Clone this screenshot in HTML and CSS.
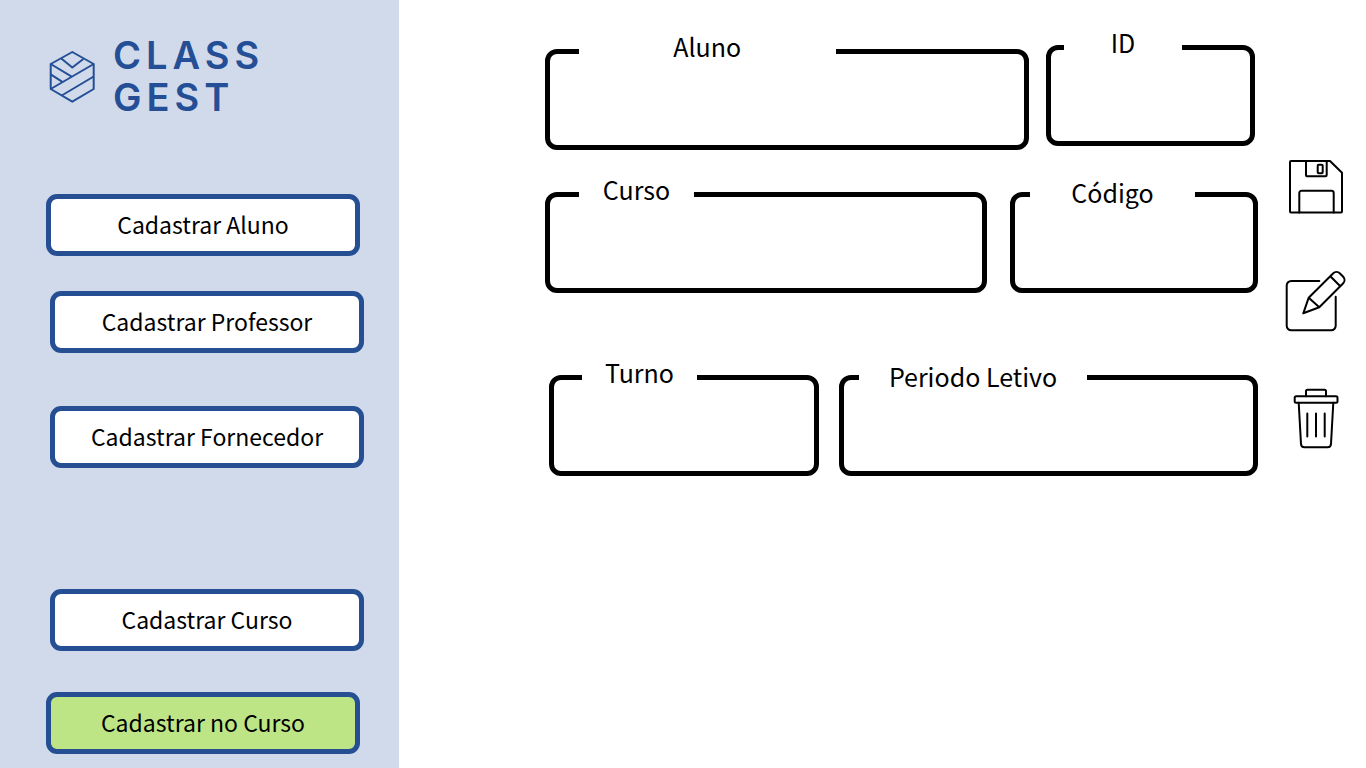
FILE: index.html
```html
<!DOCTYPE html>
<html lang="pt-BR">
<head>
<meta charset="utf-8">
<meta name="viewport" content="width=device-width, initial-scale=1">
<title>Class Gest</title>
<link rel="stylesheet" href="styles.css">
</head>
<body>
<div class="app">
  <aside class="sidebar">
    <div class="brand">
      <svg class="brand-mark" viewBox="0 0 46 52" aria-hidden="true">
        <path d="M23.3 1 44.7 13V38L23.3 50.7 1.7 38V13Z"/>
        <path d="M12.3 7.5 23.3 16.5 34.3 8"/>
        <path d="M44.7 13 1.7 38M1.7 13 22.7 25.7M1.7 23.3 13 30.7M44.7 25.5 12.7 44.5"/>
      </svg>
      <div class="brand-name">CLASS<br>GEST</div>
    </div>
    <nav class="menu">
      <button type="button" class="menu-item">Cadastrar Aluno</button>
      <button type="button" class="menu-item menu-item-inset professor">Cadastrar Professor</button>
      <button type="button" class="menu-item menu-item-inset fornecedor">Cadastrar Fornecedor</button>
      <button type="button" class="menu-item menu-item-inset curso">Cadastrar Curso</button>
      <button type="button" class="menu-item menu-item-active no-curso">Cadastrar no Curso</button>
    </nav>
  </aside>
  <main class="content">
    <form class="form">
      <div class="row row-student">
        <div class="field field-student"><label for="aluno">Aluno</label><input id="aluno" type="text"></div>
        <div class="field field-id"><label for="id">ID</label><input id="id" type="text"></div>
      </div>
      <div class="row row-course">
        <div class="field field-course"><label for="curso">Curso</label><input id="curso" type="text"></div>
        <div class="field field-code"><label for="codigo">Código</label><input id="codigo" type="text"></div>
      </div>
      <div class="row row-term">
        <div class="field field-shift"><label for="turno">Turno</label><input id="turno" type="text"></div>
        <div class="field field-period"><label for="periodo">Periodo Letivo</label><input id="periodo" type="text"></div>
      </div>
    </form>
    <div class="tools">
      <button type="button" class="tool" aria-label="Salvar">
        <svg viewBox="0 0 62 62" aria-hidden="true">
          <path d="M7 5H46L58 16.7V55.5a1 1 0 0 1-1 1h-50a1 1 0 0 1-1-1V6a1 1 0 0 1 1-1Z"/>
          <path d="M22 5V19a1.3 1.3 0 0 0 1.3 1.3H41.4A1.3 1.3 0 0 0 42.7 19V5M15.3 56.5V37a2.3 2.3 0 0 1 2.3-2.3H47.4A2.3 2.3 0 0 1 49.7 37V56.5"/>
          <rect x="33.7" y="8.7" width="5" height="8.6" rx="1"/>
        </svg>
      </button>
      <button type="button" class="tool" aria-label="Editar">
        <svg viewBox="0 0 62 62" aria-hidden="true">
          <path d="M35.3 9H7.2A4.5 4.5 0 0 0 2.7 13.5V53.8A4.5 4.5 0 0 0 7.2 58.3H47.2A4.5 4.5 0 0 0 51.7 53.8V24.7"/>
          <path d="M19.3 41.3 24.7 25.7 49 1.5C51-.5 54-.5 56 1.5L59 4.5C61 6.5 61 9.5 59 11.5L35.3 35.3ZM24.7 25.7 35.3 35.3M46.3 4.3 56.3 14.3"/>
        </svg>
      </button>
      <button type="button" class="tool" aria-label="Excluir">
        <svg viewBox="0 0 62 62" aria-hidden="true">
          <rect x="10.7" y="8.3" width="42.8" height="6.4" rx="1.5"/>
          <path d="M22 8.3V3.2A1.5 1.5 0 0 1 23.5 1.7H40.5A1.5 1.5 0 0 1 42 3.2V8.3M14.7 14.7 17 56A3.5 3.5 0 0 0 20.5 59.3H43.5A3.5 3.5 0 0 0 47 56L49.3 14.7M23.3 25.5V48.5M32 25.5V48.5M40.7 25.5V48.5"/>
        </svg>
      </button>
    </div>
  </main>
</div>
</body>
</html>
```
FILE: styles.css
```css
* {
  box-sizing: border-box;
}

body {
  margin: 0;
  background: #fff;
  color: #000;
  font-family: "Noto Sans CJK JP", "Noto Sans", sans-serif;
}

button,
input {
  font: inherit;
  color: inherit;
}

.app {
  display: grid;
  grid-template-columns: 399fr 967fr;
  min-height: 100vh;
}

.sidebar {
  padding: 34px 35px 14px 46px;
  background: #d0daeb;
}

.brand {
  display: flex;
  align-items: center;
  gap: 18px;
  padding-left: 3px;
}

.brand-mark {
  width: 46px;
  height: 52px;
  margin-top: 2px;
  fill: none;
  stroke: #244e96;
  stroke-width: 2;
  stroke-linejoin: round;
}

.brand-name {
  color: #244e96;
  font-family: Inter, sans-serif;
  font-size: 38px;
  font-weight: 600;
  letter-spacing: 5px;
  line-height: 42px;
}

.menu {
  display: flex;
  flex-direction: column;
  align-items: flex-start;
  margin-top: 76px;
}

.menu-item {
  width: calc(100% - 4px);
  height: 62px;
  padding: 0 0 2px;
  border: 5px solid #264e92;
  border-radius: 11px;
  background: #fff;
  font-size: 23px;
  line-height: 36px;
}

.menu-item-inset {
  align-self: flex-end;
}

.menu-item-active {
  background: #bde586;
}

.professor {
  margin-top: 35px;
}

.fornecedor {
  margin-top: 53px;
}

.curso {
  margin-top: 121px;
}

.no-curso {
  margin-top: 41px;
}

.content {
  display: grid;
  grid-template-columns: 1fr 62px;
  gap: 26px;
  padding: 45px 20px 20px 146px;
}

.row {
  display: grid;
}

.row-student {
  grid-template-columns: 484fr 209fr;
  gap: 17px;
  padding-right: 3px;
}

.row-course {
  grid-template-columns: 442fr 248fr;
  gap: 23px;
  margin-top: 42px;
}

.row-term {
  grid-template-columns: 270fr 419fr;
  gap: 20px;
  margin-top: 82px;
  padding-left: 4px;
}

.field {
  position: relative;
}

.field-student {
  padding-top: 4px;
}

.field input {
  display: block;
  width: 100%;
  height: 101px;
  padding: 16px 20px 8px;
  border: 5px solid #000;
  border-radius: 12px;
  background: #fff;
  font-size: 25px;
}

.field label {
  position: absolute;
  top: -23px;
  left: 34px;
  font-size: 25px;
  line-height: 40px;
  text-align: center;
  background: #fff;
}

.field-student label {
  top: -19px;
  width: 53%;
}

.field-id label {
  left: 18px;
  width: 118px;
}

.field-course label,
.field-shift label {
  width: 115px;
}

.field-shift label {
  left: 33px;
}

.field-code label {
  top: -20px;
  left: 20px;
  width: 165px;
}

.field-period label {
  top: -19px;
  left: 20px;
  width: 228px;
}

.tools {
  display: flex;
  flex-direction: column;
  gap: 54px;
  padding-top: 111px;
}

.tool {
  width: 62px;
  height: 62px;
  padding: 0;
  border: 0;
  background: none;
}

.tool svg {
  display: block;
  overflow: visible;
  fill: none;
  stroke: #000;
  stroke-width: 2;
  stroke-linecap: round;
  stroke-linejoin: round;
}
```
